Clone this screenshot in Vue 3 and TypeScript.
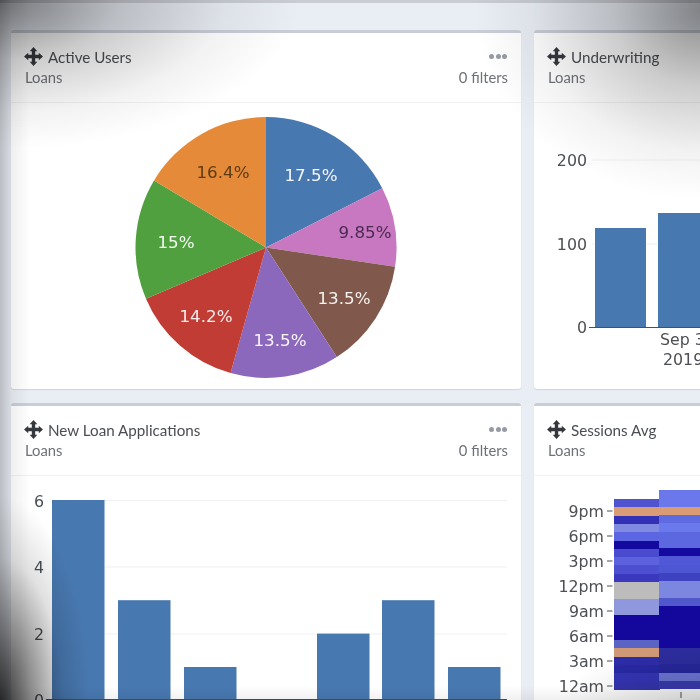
<script setup lang="ts">
interface Slice { pct: number; color: string; label: string; x: number; y: number; ink: string }
const cx = 266, cy = 247.5, r = 130.5
const raw: Slice[] = [
  { pct: 17.5, color: '#4878b0', label: '17.5%', x: 311, y: 175, ink: '#f4f7fb' },
  { pct: 9.85, color: '#c878c0', label: '9.85%', x: 365, y: 232, ink: '#4a2a50' },
  { pct: 13.5, color: '#80584c', label: '13.5%', x: 344, y: 298, ink: '#f6f2f0' },
  { pct: 13.5, color: '#8c68bc', label: '13.5%', x: 280, y: 340, ink: '#f8f5fc' },
  { pct: 14.2, color: '#c03c34', label: '14.2%', x: 206, y: 316, ink: '#fbeeee' },
  { pct: 15, color: '#50a040', label: '15%', x: 176, y: 242, ink: '#f2fbf0' },
  { pct: 16.4, color: '#e58a38', label: '16.4%', x: 223, y: 172, ink: '#5c3c14' }
]
const total = raw.reduce((s, d) => s + d.pct, 0)
let acc = 0
const point = (v: number) => {
  const a = (v / total) * Math.PI * 2
  return `${(cx + r * Math.sin(a)).toFixed(2)} ${(cy - r * Math.cos(a)).toFixed(2)}`
}
const slices = raw.map((d) => {
  const from = acc
  acc += d.pct
  const large = d.pct / total > 0.5 ? 1 : 0
  return { ...d, path: `M${cx} ${cy}L${point(from)}A${r} ${r} 0 ${large} 1 ${point(acc)}Z` }
})

const movePath = 'M9 0L12.6 4H10.6V7.4H14V5.4L18 9L14 12.6V10.6H10.6V14H12.6L9 18L5.4 14H7.4V10.6H4V12.6L0 9L4 5.4V7.4H7.4V4H5.4Z'
const unit = 33.4
const base = 700.4
const loanBars = [
  { x: 52, v: 6 }, { x: 118, v: 3 }, { x: 184, v: 1 },
  { x: 317, v: 2 }, { x: 382, v: 3 }, { x: 448, v: 1 }
]
const loanTicks = [
  { label: '6', y: 500.5 }, { label: '4', y: 567 }, { label: '2', y: 634 }, { label: '0', y: 700 }
]
const uwTicks = [{ label: '200', y: 160 }, { label: '100', y: 244 }, { label: '0', y: 327 }]
const hourTicks = [
  { label: '9pm', y: 511 }, { label: '6pm', y: 536 }, { label: '3pm', y: 561 }, { label: '12pm', y: 586 },
  { label: '9am', y: 611 }, { label: '6am', y: 636 }, { label: '3am', y: 661 }, { label: '12am', y: 686 }
]
const h = 8.3
const col1 = ['#4f53cf', '#d99c74', '#3230b4', '#7f8ae0', '#5c66e2', '#14099e', '#4a4cd0', '#5c62de', '#4c50d0', '#3a38bc',
  '#bcbcbc', '#bcbcbc', '#8f98dc', '#8f98dc', '#14089c', '#14089c', '#14089c', '#5a64c4', '#cf9876', '#2c2ca8', '#2828a4', '#3434b4', '#3434ae']
const col2 = ['#6a78ec', '#6a78ec', '#d99c74', '#5e6ae0', '#6a7aec', '#5c68e0', '#5c68e0', '#140aa0', '#5058d8', '#4e56d4', '#3e42c0',
  '#7c88e0', '#7c88e0', '#5058cc', '#14089c', '#14089c', '#14089c', '#14089c', '#14089c', '#2c2c9c', '#2c2c9c', '#26269a', '#6a74d0', '#3a3ab0']
</script>

<template>
  <div class="page">
    <div class="topline"></div>
    <div class="grid">
      <section class="card">
        <header class="head">
          <div class="row">
            <h3 class="title">
              <svg class="move" viewBox="0 0 18 18"><path :d="movePath" /></svg>
              Active Users
            </h3>
            <span class="dots"><i></i><i></i><i></i></span>
          </div>
          <div class="row sub"><span>Loans</span><span>0 filters</span></div>
        </header>
        <svg class="chart" viewBox="11 103 510 283">
          <path v-for="(s, i) in slices" :key="i" :d="s.path" :fill="s.color" />
          <text v-for="(s, i) in slices" :key="'t' + i" class="pie-label" :x="s.x" :y="s.y + 6" :fill="s.ink">{{ s.label }}</text>
        </svg>
      </section>

      <section class="card">
        <header class="head">
          <div class="row">
            <h3 class="title">
              <svg class="move" viewBox="0 0 18 18"><path :d="movePath" /></svg>
              Underwriting
            </h3>
          </div>
          <div class="row sub"><span>Loans</span></div>
        </header>
        <svg class="chart" viewBox="534 103 510 283">
          <line v-for="t in uwTicks.slice(0, 2)" :key="t.label" x1="592" x2="1020" :y1="t.y" :y2="t.y" class="grid-line" />
          <rect x="595" y="228" width="51" height="99" fill="#4878b0" />
          <rect x="658" y="213" width="51" height="114" fill="#4878b0" />
          <line x1="589" x2="1020" y1="327.500" y2="327.500" class="axis" />
          <text v-for="t in uwTicks" :key="t.label" class="tick" x="587" :y="t.y + 6">{{ t.label }}</text>
          <text class="tick-x" x="660" y="345">Sep 3</text>
          <text class="tick-x" x="663" y="365">2019</text>
        </svg>
      </section>

      <section class="card">
        <header class="head">
          <div class="row">
            <h3 class="title">
              <svg class="move" viewBox="0 0 18 18"><path :d="movePath" /></svg>
              New Loan Applications
            </h3>
            <span class="dots"><i></i><i></i><i></i></span>
          </div>
          <div class="row sub"><span>Loans</span><span>0 filters</span></div>
        </header>
        <svg class="chart" viewBox="11 476 510 283">
          <line v-for="t in loanTicks.slice(0, 3)" :key="t.label" x1="52" x2="507" :y1="t.y" :y2="t.y" class="grid-line" />
          <rect v-for="b in loanBars" :key="b.x" :x="b.x" :y="base - b.v * unit" width="52.500" :height="b.v * unit" fill="#4878b0" />
          <line x1="46" x2="507" y1="699.500" y2="699.500" class="axis" />
          <text v-for="t in loanTicks" :key="t.label" class="tick" x="44" :y="t.y + 6">{{ t.label }}</text>
        </svg>
      </section>

      <section class="card">
        <header class="head">
          <div class="row">
            <h3 class="title">
              <svg class="move" viewBox="0 0 18 18"><path :d="movePath" /></svg>
              Sessions Avg
            </h3>
          </div>
          <div class="row sub"><span>Loans</span></div>
        </header>
        <svg class="chart" viewBox="534 476 510 283">
          <g class="heat">
            <rect v-for="(c, i) in col1" :key="'a' + i" x="614" :y="499 + i * h" width="45.500" :height="h" :fill="c" shape-rendering="crispEdges" />
            <rect v-for="(c, i) in col2" :key="'b' + i" x="659" :y="490 + i * h" width="45" :height="h" :fill="c" shape-rendering="crispEdges" />
          </g>
          <g v-for="t in hourTicks" :key="t.label">
            <text class="tick" x="604" :y="t.y + 5.500">{{ t.label }}</text>
            <line x1="607" x2="612.500" :y1="t.y" :y2="t.y" class="axis" />
          </g>
          <line x1="681" x2="681" y1="692" y2="698" class="axis" />
        </svg>
      </section>
    </div>
    <div class="vignette"></div>
  </div>
</template>

<style scoped>
.page {
  position: relative;
  width: 700px;
  height: 700px;
  overflow: hidden;
  background: #e9edf4;
  font-family: Lato, "Open Sans", sans-serif;
  filter: blur(0.45px);
}
.topline {
  height: 3px;
  background: #c9ccd3;
}
.grid {
  display: grid;
  grid-template-columns: 510px 510px;
  grid-template-rows: 359px 359px;
  gap: 14px 13px;
  padding: 27px 0 0 11px;
}
.card {
  display: flex;
  flex-direction: column;
  background: #fff;
  border-top: 3px solid #c8cdd7;
  border-radius: 3px;
  box-shadow: 0 1px 1px rgba(90, 100, 120, 0.18);
  overflow: hidden;
}
.head {
  height: 70px;
  flex: none;
  box-sizing: border-box;
  padding: 11.500px 13px 0 13px;
  border-bottom: 1px solid #eff1f3;
}
.row {
  display: flex;
  justify-content: space-between;
  align-items: center;
}
.title {
  display: flex;
  align-items: center;
  gap: 5px;
  height: 24px;
  margin: 0;
  font-size: 15.200px;
  font-weight: 400;
  color: #4a4d52;
}
.move {
  width: 19px;
  height: 19px;
  fill: #35383d;
}
.dots {
  display: flex;
  gap: 1.500px;
  margin-right: 1px;
}
.dots i {
  width: 5px;
  height: 5px;
  border-radius: 50%;
  background: #979ba3;
}
.sub {
  height: 20px;
  margin-top: -1.500px;
  margin-left: 1px;
  font-size: 14.800px;
  color: #6e7278;
}
.chart {
  display: block;
  flex: none;
  width: 510px;
  height: 283px;
}
.heat {
  filter: blur(0.6px);
}
.pie-label {
  font-family: "DejaVu Sans", sans-serif;
  font-size: 16.700px;
  text-anchor: middle;
}
.tick {
  font-family: "DejaVu Sans", sans-serif;
  font-size: 15.800px;
  fill: #4c4f53;
  text-anchor: end;
}
.tick-x {
  font-family: "DejaVu Sans", sans-serif;
  font-size: 15.800px;
  fill: #4c4f53;
}
.grid-line {
  stroke: #eef0f2;
  stroke-width: 1;
}
.axis {
  stroke: #4c4f53;
  stroke-width: 1;
}
.vignette {
  position: absolute;
  inset: 0;
  pointer-events: none;
  background:
    radial-gradient(ellipse 90px 210px at 0 705px, rgba(0, 0, 0, 0.8), rgba(0, 0, 0, 0.45) 35%, rgba(0, 0, 0, 0.12) 70%, rgba(0, 0, 0, 0) 100%),
    radial-gradient(ellipse 300px 150px at 0 0, rgba(0, 0, 0, 0.5), rgba(0, 0, 0, 0.2) 40%, rgba(0, 0, 0, 0.05) 75%, rgba(0, 0, 0, 0) 100%),
    radial-gradient(ellipse 230px 190px at 705px 10px, rgba(0, 0, 0, 0.46), rgba(0, 0, 0, 0.2) 40%, rgba(0, 0, 0, 0.05) 75%, rgba(0, 0, 0, 0) 100%),
    radial-gradient(ellipse 140px 50px at 700px 700px, rgba(0, 0, 0, 0.15), rgba(0, 0, 0, 0) 100%),
    linear-gradient(to top, rgba(0, 0, 0, 0.06), rgba(0, 0, 0, 0) 14px),
    linear-gradient(to right, rgba(0, 0, 0, 0.2), rgba(0, 0, 0, 0.06) 12px, rgba(0, 0, 0, 0) 30px);
}
</style>
